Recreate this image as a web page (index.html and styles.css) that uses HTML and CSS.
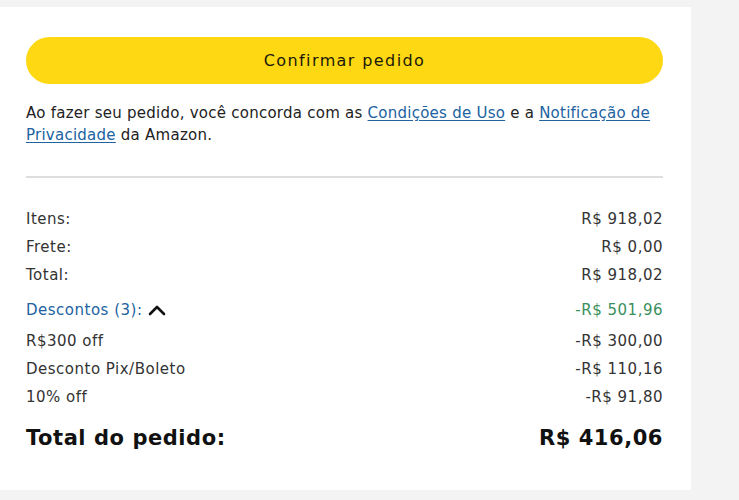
FILE: index.html
```html
<!DOCTYPE html>
<html lang="pt-BR">
<head>
<meta charset="utf-8">
<title>Resumo do pedido</title>
<link rel="stylesheet" href="styles.css">
</head>
<body>
<div class="panel">
  <button class="confirm">Confirmar pedido</button>
  <p class="terms">Ao fazer seu pedido, você concorda com as <a href="#">Condições de Uso</a> e a <a href="#">Notificação de Privacidade</a> da Amazon.</p>
  <hr class="divider">
  <div class="rows">
    <div class="row"><span>Itens:</span><span>R$ 918,02</span></div>
    <div class="row"><span>Frete:</span><span>R$ 0,00</span></div>
    <div class="row"><span>Total:</span><span>R$ 918,02</span></div>
    <div class="row discounts"><span class="disc-label">Descontos (3): <svg class="chev" width="18" height="12" viewBox="0 0 18 12"><path d="M2 10 L9 3 L16 10" fill="none" stroke="#111" stroke-width="2.6" stroke-linecap="round" stroke-linejoin="round"/></svg></span><span class="green">-R$ 501,96</span></div>
    <div class="row sub first"><span>R$300 off</span><span>-R$ 300,00</span></div>
    <div class="row sub"><span>Desconto Pix/Boleto</span><span>-R$ 110,16</span></div>
    <div class="row sub"><span>10% off</span><span>-R$ 91,80</span></div>
    <div class="row grand"><span>Total do pedido:</span><span>R$ 416,06</span></div>
  </div>
</div>
</body>
</html>
```
FILE: styles.css
```css
html, body {
  margin: 0;
  padding: 0;
  background: #f3f3f3;
}
body {
  padding-top: 7px;
  height: 500px;
  box-sizing: border-box;
  font-family: "DejaVu Sans", "Liberation Sans", sans-serif;
  color: #222;
}
.panel {
  width: 691px;
  height: 483px;
  box-sizing: border-box;
  background: #fff;
  padding: 30px 28px 0 26px;
}
.confirm {
  display: block;
  width: 100%;
  height: 47px;
  border: none;
  border-radius: 24px;
  background: #ffd814;
  font-family: inherit;
  font-size: 16px;
  letter-spacing: 1.4px;
  color: #1a1a0a;
  cursor: pointer;
}
.terms {
  margin: 18px 0 0;
  font-size: 15px;
  line-height: 22px;
  color: #222;
  letter-spacing: 0.25px;
}
.terms a {
  color: #2162a1;
  text-decoration: underline;
  text-underline-offset: 2px;
}
.divider {
  margin: 30px 0 0;
  border: none;
  border-top: 2px solid #dddddd;
}
.rows {
  margin-top: 27px;
}
.row {
  display: flex;
  justify-content: space-between;
  align-items: center;
  height: 28px;
  font-size: 15px;
  letter-spacing: 0.5px;
  color: #333;
}
.discounts {
  margin-top: 7px;
}
.disc-label {
  display: flex;
  align-items: center;
  gap: 6px;
  color: #2162a1;
}
.chev {
  display: block;
}
.green {
  color: #3a8f5c;
}
.sub.first {
  margin-top: 3px;
}
.grand {
  margin-top: 13px;
  font-size: 21px;
  letter-spacing: 0.55px;
  font-weight: 700;
  color: #111;
}
```
